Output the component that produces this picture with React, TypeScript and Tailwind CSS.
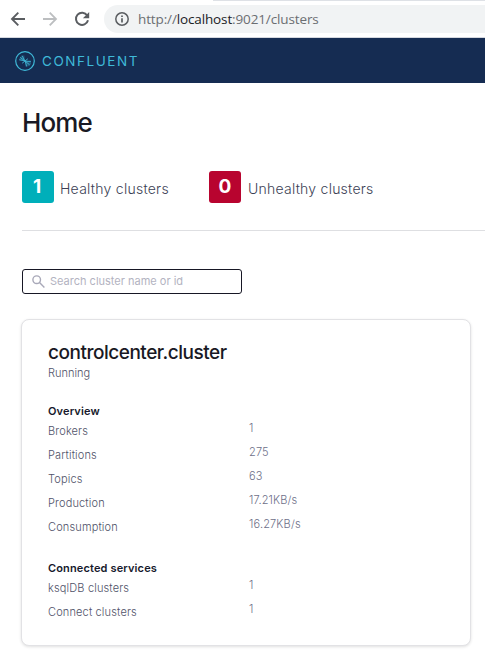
import React from "react";

const overview = [
  ["Brokers", "1"],
  ["Partitions", "275"],
  ["Topics", "63"],
  ["Production", "17.21KB/s"],
  ["Consumption", "16.27KB/s"],
];
const services = [
  ["ksqlDB clusters", "1"],
  ["Connect clusters", "1"],
];

function BrowserBar() {
  return (
    <div className="flex h-[37px] flex-col bg-white">
      <div className="ml-[213px] h-px bg-[#dee1e6]" />
      <div className="mt-1 flex h-7 items-center">
        <svg className="ml-2.5 shrink-0" width="16" height="16" viewBox="0 0 16 16" fill="none" stroke="#5a5d61" strokeWidth="1.9">
          <path d="M15 8H2.5M8.3 1.7L2 8l6.3 6.3" />
        </svg>
        <svg className="ml-4 shrink-0" width="16" height="16" viewBox="0 0 16 16" fill="none" stroke="#bcbec0" strokeWidth="1.8">
          <path d="M1 8h12.5M7.7 1.7L14 8l-6.3 6.3" />
        </svg>
        <svg className="ml-4 shrink-0" width="16" height="16" viewBox="0 0 16 16" fill="none">
          <path d="M13.2 4.5A6.1 6.1 0 1 0 14 9.3" stroke="#5a5d61" strokeWidth="2" />
          <path d="M15.2 1v6.3H8.9z" fill="#5a5d61" />
        </svg>
        <div className="ml-[14px] flex h-7 grow items-center rounded-l-full bg-[#f1f3f4] pl-[11px]">
          <svg width="14" height="14" viewBox="0 0 14 14" fill="none" stroke="#5a5d61" strokeWidth="1.5">
            <circle cx="7" cy="7" r="6.2" />
            <path d="M7 6.2v4.3M7 3.4v1.6" strokeWidth="1.7" />
          </svg>
          <span className="ml-[9px] whitespace-nowrap font-['Open_Sans',sans-serif] text-[13.5px] tracking-[-0.13px] text-[#6b6e72]">
            http://<span className="text-[#202124]">localhost</span>:9021/clusters
          </span>
        </div>
      </div>
    </div>
  );
}

function Brand() {
  return (
    <div className="flex h-[46px] items-center border-t border-[#d5d8df] bg-[#152c52] pl-[15px]">
      <svg width="20" height="20" viewBox="0 0 20 20" fill="none" stroke="#3fb9d8">
        <circle cx="10" cy="10" r="9.3" strokeWidth="1.2" />
        <path d="M9.8 9.8L4 8.6L5 6.4L6.6 4.6L9.4 4.4ZM10.2 10.2l5.8-.4v3.2l-2 2l-3.4.8Z" fill="#3fb9d8" fillOpacity=".3" stroke="none" />
        <path d="M9.8 9.8L4.2 8.8M9.8 9.8L5.2 6.4M9.8 9.8L7.2 4.8M10.2 10.2l5.6.2M10.2 10.2l4.4 3.6M10.2 10.2l1.4 5.2M10 10l-2.8 2.2M10 10l2.8-2.2" strokeWidth=".9" />
      </svg>
      <span className="ml-[7px] font-[Inter,sans-serif] text-[13.5px] leading-5 tracking-[1.55px] text-[#3fb9d8]">CONFLUENT</span>
    </div>
  );
}

function Stats({ title, rows }: { title: string; rows: string[][] }) {
  return (
    <section>
      <h3 className="h-5 text-[11px] leading-5 font-semibold tracking-[0.14px] text-[#16192c]">{title}</h3>
      {rows.map(([label, value]) => (
        <div key={label} className="flex h-6">
          <span className="w-[201px] text-[11px] leading-5 font-light tracking-[0.15px] text-[#4f5268]">{label}</span>
          <span className="text-[11px] leading-[14px] font-light tracking-[0.15px] text-[#6d6f88]">{value}</span>
        </div>
      ))}
    </section>
  );
}

export default function App() {
  return (
    <div className="flex h-[654px] w-[485px] flex-col overflow-hidden bg-white font-[Inter,sans-serif]">
      <BrowserBar />
      <Brand />
      <main className="pl-[22px]">
        <h1 className="mt-6 h-8 text-[26px] leading-8 font-medium tracking-[-0.9px] text-[#191924]">Home</h1>
        <div className="mt-8 flex h-8 items-center">
          <span className="flex size-8 items-center justify-center rounded-[3px] bg-[#00afba] pr-0.5 text-[19px] font-bold text-white">1</span>
          <span className="ml-1.5 mt-[3px] w-[149px] text-[14px] leading-5 font-light tracking-[0.26px] text-[#3c3f55]">Healthy clusters</span>
          <span className="flex size-8 items-center justify-center rounded-[3px] bg-[#b8042f] text-[19px] font-bold text-white">0</span>
          <span className="ml-[7px] mt-[3px] text-[14px] leading-5 font-light tracking-[0.24px] text-[#3c3f55]">Unhealthy clusters</span>
        </div>
        <div className="mt-[27px] h-px bg-[#dedfe2]" />
        <div className="mt-[38px] flex h-[25px] w-[220px] items-center rounded-[3px] border border-[#171725] pl-[9px]">
          <svg width="13" height="13" viewBox="0 0 13 13" fill="none" stroke="#a8a8b8" strokeWidth="1.4">
            <circle cx="4.7" cy="4.7" r="3.8" />
            <path d="M7.5 7.5l4.9 4.9" />
          </svg>
          <span className="mb-0.5 ml-[5px] text-[11px] leading-5 text-[#b3b3c1]">Search cluster name or id</span>
        </div>
        <article className="-ml-px mt-[25px] h-[327px] w-[450px] rounded-lg border border-[#e2e2e5] bg-white pl-[26px] shadow-[0_1px_3px_rgba(0,0,0,0.12)]">
          <h2 className="mt-[21px] h-6 text-[19px] leading-6 font-medium tracking-[-0.48px] text-[#191924]">controlcenter.cluster</h2>
          <p className="h-[18px] text-[11px] leading-4 font-light text-[#4f5268]">Running</p>
          <div className="mt-[18px] flex flex-col gap-[17px]">
            <Stats title="Overview" rows={overview} />
            <Stats title="Connected services" rows={services} />
          </div>
        </article>
      </main>
    </div>
  );
}
